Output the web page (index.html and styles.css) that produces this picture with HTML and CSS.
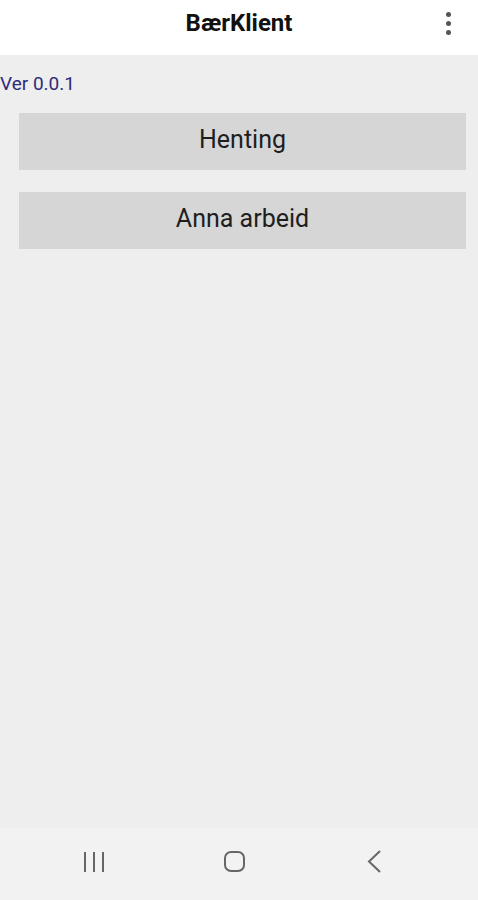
FILE: index.html
```html
<!DOCTYPE html>
<html lang="no">
<head>
    <meta charset="UTF-8">
    <title>BærKlient</title>
    <link rel="stylesheet" href="styles.css">
</head>
<body>

    <div class="app">
        <header class="topbar">
            <h1>BærKlient</h1>
            <div class="menu">
                <span></span><span></span><span></span>
            </div>
        </header>

        <main class="content">
            <div class="version">Ver 0.0.1</div>
            <button class="big">Henting</button>
            <button class="big">Anna arbeid</button>
        </main>

        <nav class="navbar">
            <svg width="24" height="24" viewBox="0 0 24 24">
                <path d="M3 2v20M12 2v20M21 2v20" stroke="#666" stroke-width="2" fill="none"/>
            </svg>
            <svg width="24" height="24" viewBox="0 0 24 24">
                <rect x="3" y="2" width="19" height="19" rx="6" stroke="#666" stroke-width="2" fill="none"/>
            </svg>
            <svg width="24" height="24" viewBox="0 0 24 24">
                <path d="M18 1L7 11.5l11 10.5" stroke="#666" stroke-width="2" fill="none"/>
            </svg>
        </nav>
    </div>

</body>
</html>
```

FILE: styles.css
```css
* {
    box-sizing: border-box;
}

body {
    margin: 0;
    font-family: Roboto, "Noto Sans", sans-serif;
    background-color: #eeeeee;
}

.app {
    display: flex;
    flex-direction: column;
    height: 900px;
}

.topbar {
    height: 55px;
    background-color: #fff;
    display: flex;
    align-items: center;
    justify-content: center;
    position: relative;
}

.topbar h1 {
    margin: 0 0 10px 0;
    font-size: 24px;
    font-weight: bold;
    color: #111;
}

.menu {
    position: absolute;
    right: 27px;
    top: 12px;
    display: flex;
    flex-direction: column;
    gap: 4px;
}

.menu span {
    width: 5px;
    height: 5px;
    border-radius: 50%;
    background-color: #555;
}

.content {
    flex: 1;
    display: flex;
    flex-direction: column;
    padding: 0 12px 0 19px;
}

.version {
    margin: 18px 0 0 -19px;
    font-size: 19px;
    line-height: 22px;
    color: #2e2c7a;
    height: 22px;
}

.big {
    margin-top: 18px;
    height: 57px;
    border: none;
    background-color: #d6d6d6;
    font-family: Roboto, "Noto Sans", sans-serif;
    font-size: 25px;
    color: #1e1e1e;
    padding: 0 0 4px 0;
}

.big + .big {
    margin-top: 22px;
}

.navbar {
    height: 72px;
    background-color: #f2f2f2;
    display: flex;
    gap: 116px;
    align-items: flex-start;
    padding: 22px 0 0 82px;
}
```
